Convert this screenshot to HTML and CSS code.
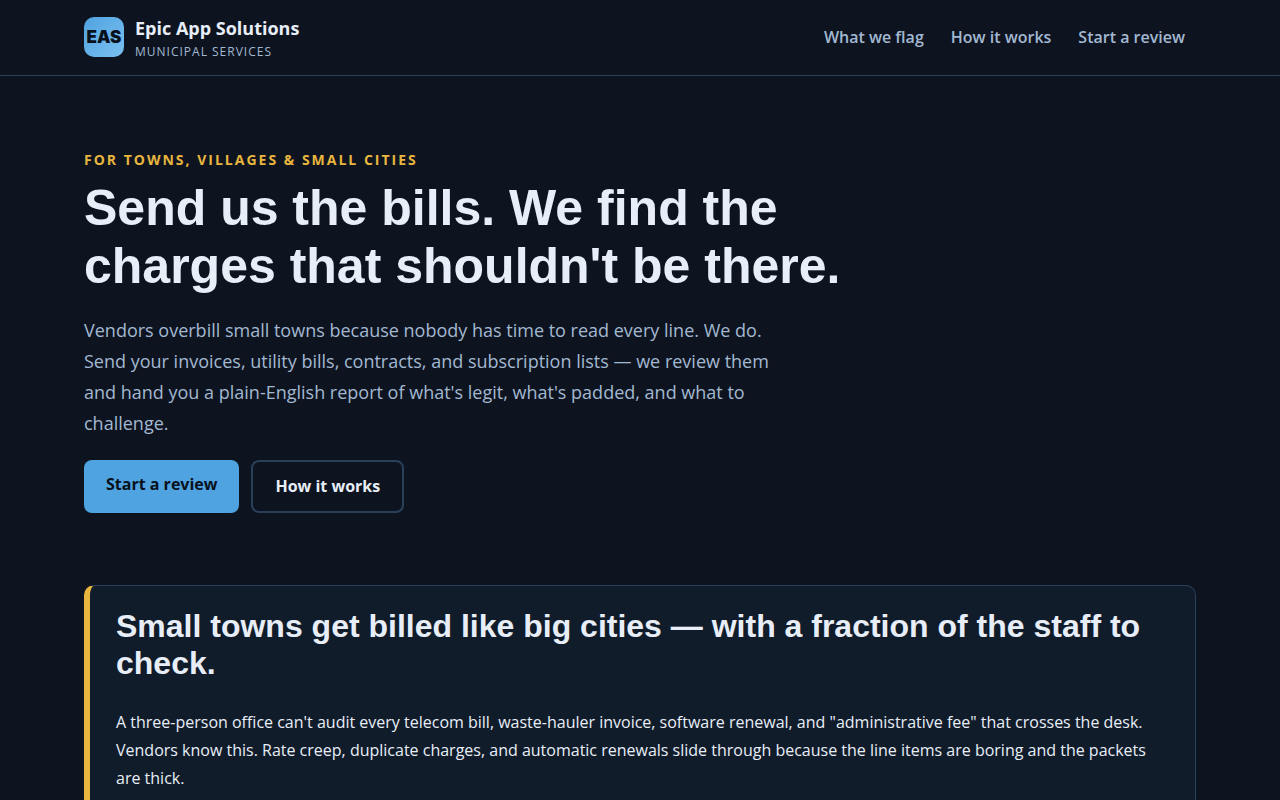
FILE: index.html
```
<!DOCTYPE html>
<html lang="en">

<head>
    <meta charset="UTF-8">
    <meta name="viewport" content="width=device-width, initial-scale=1.0">
    <title>Epic App Solutions | Municipal Services</title>
    <link rel="stylesheet" href="styles.css">
</head>

<body>
    <header class="site-header">
        <div class="container header-inner">
            <a class="brand" href="#top">
                <span class="brand-mark">EAS</span>
                <span class="brand-text">
                    <span class="brand-name">Epic App Solutions</span>
                    <span class="brand-sub">Municipal Services</span>
                </span>
            </a>
            <nav class="nav">
                <a href="#flags">What we flag</a>
                <a href="#how">How it works</a>
                <a href="#start">Start a review</a>
            </nav>
        </div>
    </header>

    <main id="top" class="container">
        <section class="hero">
            <p class="eyebrow">For towns, villages &amp; small cities</p>
            <h1>Send us the bills. We find the charges that shouldn't be there.</h1>
            <p class="lead">Vendors overbill small towns because nobody has time to read every line. We do. Send your invoices, utility bills, contracts, and subscription lists — we review them and hand you a plain-English report of what's legit, what's padded, and what to challenge.</p>
            <div class="actions">
                <a class="btn btn-primary" href="#start">Start a review</a>
                <a class="btn btn-outline" href="#how">How it works</a>
            </div>
        </section>

        <section class="callout">
            <h2>Small towns get billed like big cities — with a fraction of the staff to check.</h2>
            <p>A three-person office can't audit every telecom bill, waste-hauler invoice, software renewal, and "administrative fee" that crosses the desk. Vendors know this. Rate creep, duplicate charges, and automatic renewals slide through because the line items are boring and the packets are thick.</p>
        </section>
    </main>
</body>

</html>
```
FILE: styles.css
```
:root {
    --bg: #0d1420;
    --panel: #111c2b;
    --line: #2a3f5a;
    --text: #e8eef7;
    --muted: #a3b8d1;
    --blue: #4fa3e0;
    --gold: #e8b63e;
}

* {
    box-sizing: border-box;
}

body {
    margin: 0;
    background: var(--bg);
    color: var(--text);
    font-family: "Segoe UI", "Open Sans", "Noto Sans", sans-serif;
    font-size: 16px;
    line-height: 28px;
}

a {
    color: inherit;
    text-decoration: none;
}

.container {
    max-width: 1160px;
    margin: 0 auto;
    padding: 0 24px;
}

.site-header {
    border-bottom: 1px solid var(--line);
}

.header-inner {
    display: flex;
    align-items: center;
    justify-content: space-between;
    padding-top: 13px;
    padding-bottom: 15px;
}

.brand {
    display: flex;
    align-items: center;
    gap: 11px;
}

.brand-mark {
    display: flex;
    align-items: center;
    justify-content: center;
    width: 40px;
    height: 40px;
    border-radius: 10px;
    background: linear-gradient(135deg, var(--blue), #7bc0f0);
    color: #08111c;
    font-family: "Arial Black", Inter, sans-serif;
    font-size: 17px;
    font-weight: 900;
}

.brand-text {
    display: flex;
    flex-direction: column;
}

.brand-name {
    font-size: 18px;
    font-weight: 700;
    line-height: 30px;
}

.brand-sub {
    color: var(--muted);
    font-size: 12px;
    line-height: 17px;
    letter-spacing: 1px;
    text-transform: uppercase;
}

.nav {
    display: flex;
    gap: 27px;
    padding-right: 11px;
    color: var(--muted);
    font-weight: 600;
}

.hero {
    padding: 72px 0;
}

.eyebrow {
    margin: 0;
    color: var(--gold);
    font-size: 14px;
    font-weight: 700;
    line-height: 24px;
    letter-spacing: 2px;
    text-transform: uppercase;
}

h1,
h2 {
    margin: 0;
    font-family: "Liberation Sans", Arial, sans-serif;
    font-weight: 700;
}

h1 {
    max-width: 800px;
    margin-top: 7px;
    font-size: 50px;
    line-height: 58px;
}

.lead {
    max-width: 700px;
    margin: 20px 0 21px;
    color: var(--muted);
    font-size: 18px;
    line-height: 31px;
}

.actions {
    display: flex;
    gap: 12px;
}

.btn {
    padding: 12px 22px;
    border-radius: 8px;
    font-weight: 700;
    line-height: 25px;
}

.btn-primary {
    background: var(--blue);
    color: #08111c;
}

.btn-outline {
    border: 2px solid var(--line);
}

.callout {
    padding: 22px 26px;
    border: 1px solid var(--line);
    border-left: 6px solid var(--gold);
    border-radius: 10px;
    background: var(--panel);
}

.callout h2 {
    font-size: 32px;
    line-height: 37px;
}

.callout p {
    margin: 26px 0 0;
}
```
